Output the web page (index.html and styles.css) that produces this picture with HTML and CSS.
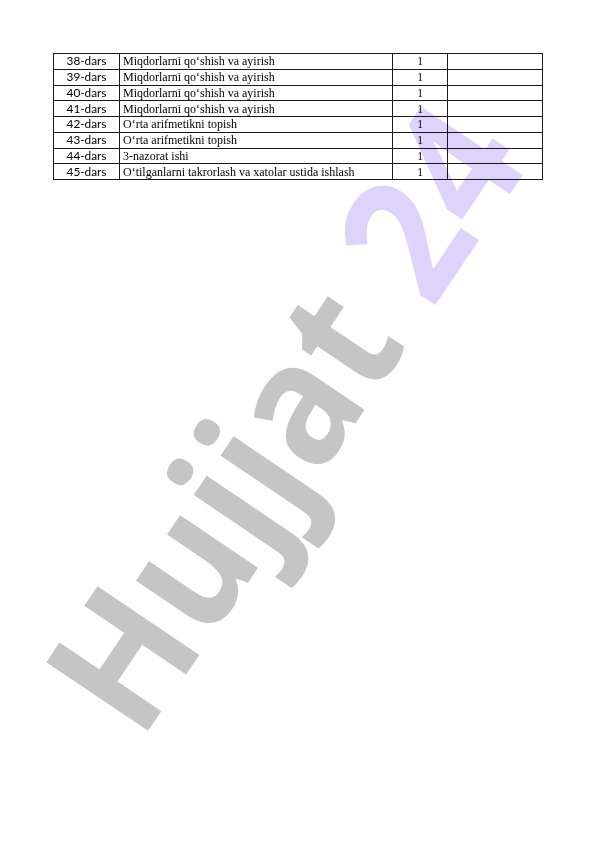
FILE: index.html
```html
<!DOCTYPE html>
<html lang="uz">
<head>
<meta charset="utf-8">
<title>Dars rejasi</title>
<link rel="stylesheet" href="styles.css">
</head>
<body>
<div class="page">
  <table class="plan">
    <colgroup>
      <col class="c1"><col class="c2"><col class="c3"><col class="c4">
    </colgroup>
    <tbody>
      <tr><td class="num">38-dars</td><td class="topic">Miqdorlarni qo‘shish va ayirish</td><td class="hours">1</td><td></td></tr>
      <tr><td class="num">39-dars</td><td class="topic">Miqdorlarni qo‘shish va ayirish</td><td class="hours">1</td><td></td></tr>
      <tr><td class="num">40-dars</td><td class="topic">Miqdorlarni qo‘shish va ayirish</td><td class="hours">1</td><td></td></tr>
      <tr><td class="num">41-dars</td><td class="topic">Miqdorlarni qo‘shish va ayirish</td><td class="hours">1</td><td></td></tr>
      <tr><td class="num">42-dars</td><td class="topic">O‘rta arifmetikni topish</td><td class="hours">1</td><td></td></tr>
      <tr><td class="num">43-dars</td><td class="topic">O‘rta arifmetikni topish</td><td class="hours">1</td><td></td></tr>
      <tr><td class="num">44-dars</td><td class="topic">3-nazorat ishi</td><td class="hours">1</td><td></td></tr>
      <tr><td class="num">45-dars</td><td class="topic">O‘tilganlarni takrorlash va xatolar ustida ishlash</td><td class="hours">1</td><td></td></tr>
    </tbody>
  </table>
  <div class="watermark" aria-hidden="true"><span class="wm-a">Hujjat</span> <span class="wm-b">24</span></div>
</div>
</body>
</html>
```
FILE: styles.css
```css
html, body {
  margin: 0;
  padding: 0;
  background: #ffffff;
}
.page {
  position: relative;
  width: 596px;
  height: 842px;
  overflow: hidden;
  padding: 53px 0 0 53px;
  box-sizing: border-box;
}
.plan {
  border-collapse: collapse;
  table-layout: fixed;
  width: 489px;
  color: #000;
}
.c1 { width: 66px; }
.c2 { width: 273px; }
.c3 { width: 55px; }
.c4 { width: 95px; }
.plan td {
  border: 1px solid #1a1a1a;
  height: 14.75px;
  padding: 0 3px;
  line-height: 14px;
  white-space: nowrap;
  overflow: hidden;
  vertical-align: middle;
}
.num {
  font-family: "Lato", "Open Sans", sans-serif;
  font-size: 11.8px;
  text-align: center;
}
.topic {
  font-family: "Liberation Serif", "Times New Roman", serif;
  font-size: 12px;
  text-align: left;
  padding-left: 2px;
}
.hours {
  font-family: "Liberation Serif", "Times New Roman", serif;
  font-size: 11.5px;
  text-align: center;
}
.watermark {
  position: absolute;
  left: 156px;
  top: 753px;
  transform-origin: 0 0;
  transform: rotate(-56deg) scaleX(0.91) translateY(-100%);
  font-family: "Open Sans", sans-serif;
  font-weight: 700;
  font-size: 172px;
  line-height: 1;
  white-space: nowrap;
  mix-blend-mode: multiply;
  pointer-events: none;
}
.wm-a { color: #c5c5c5; }
.wm-b { color: #ddd3fb; }
```
